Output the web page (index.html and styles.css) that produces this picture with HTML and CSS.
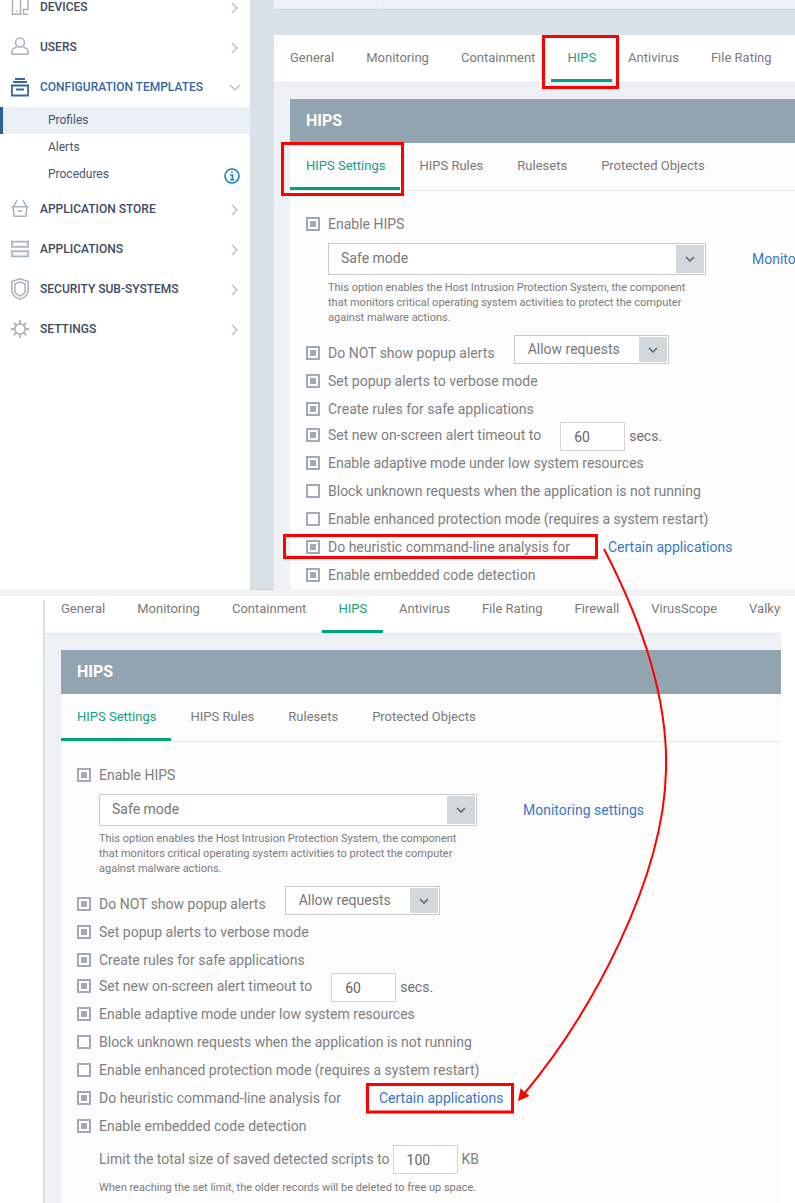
FILE: index.html
```html
<!DOCTYPE html>
<html lang="en">
<head>
<meta charset="utf-8">
<title>HIPS settings</title>
<link rel="stylesheet" href="styles.css">
</head>
<body>
<div class="page">
  <section class="shot shot-upper">
    <aside class="sidebar">
      <ul class="nav">
        <li class="nav-item"><svg class="nav-icon" viewBox="0 0 18 18"><path d="M1.5 -2V17.200H9.500V-2M4.800 14h1.500M17 -2V12.500H12.500V17.200H17"/></svg><span>DEVICES</span><svg class="chev" viewBox="0 0 8 12"><path d="M1 1l5 5-5 5"/></svg></li>
        <li class="nav-item"><svg class="nav-icon" viewBox="0 0 18 18"><circle cx="9" cy="5.500" r="4.500"/><path d="M.8 17.200V15c0-2.800 3-4.500 5-4.800M17.200 17.200V15c0-2.800-3-4.500-5-4.800M.8 17.200H17.200"/></svg><span>USERS</span><svg class="chev" viewBox="0 0 8 12"><path d="M1 1l5 5-5 5"/></svg></li>
        <li class="nav-item nav-open"><svg class="nav-icon" viewBox="0 0 18 18"><path d="M4 2H14M2 5H16M.9 8.500H17.100V18.500H.9ZM5 12.500H13"/></svg><span>CONFIGURATION TEMPLATES</span><svg class="chev chev-down" viewBox="0 0 12 8"><path d="M1 1l5 5 5-5"/></svg></li>
        <li class="sub-item sub-active">Profiles</li>
        <li class="sub-item">Alerts</li>
        <li class="sub-item">Procedures<svg class="info" viewBox="0 0 16 16"><circle cx="8" cy="8" r="7"/><path d="M6.200 7H8.400V11.800M6.200 11.800H10.200M7.200 4.300H8.700"/></svg></li>
        <li class="nav-item"><svg class="nav-icon" viewBox="0 0 18 18"><path d="M.5 7.800H17.500M2 7.800L3.200 17.300H14.800L16 7.800M6 1L2.500 7.800M12 1L15.500 7.800M6.500 12H11.500"/></svg><span>APPLICATION STORE</span><svg class="chev" viewBox="0 0 8 12"><path d="M1 1l5 5-5 5"/></svg></li>
        <li class="nav-item"><svg class="nav-icon nav-icon-bands" viewBox="0 0 18 18"><path d="M.8 1.500H17.200V7H.8ZM.8 11H17.200V16.500H.8Z"/><path class="band-line" d="M3 4.200H15M3 13.700H15"/></svg><span>APPLICATIONS</span><svg class="chev" viewBox="0 0 8 12"><path d="M1 1l5 5-5 5"/></svg></li>
        <li class="nav-item"><svg class="nav-icon nav-icon-tall" viewBox="0 0 18 22"><path d="M9 .8L17.200 3.500V12.500C17.200 17 13 19.700 9 21.200 5 19.700 .8 17 .8 12.500V3.500Z"/><path d="M9 4L14.200 5.700V12.500C14.200 15 11.500 16.900 9 18 6.500 16.900 3.800 15 3.800 12.500V5.700Z"/></svg><span>SECURITY SUB-SYSTEMS</span><svg class="chev" viewBox="0 0 8 12"><path d="M1 1l5 5-5 5"/></svg></li>
        <li class="nav-item"><svg class="nav-icon nav-icon-gear" viewBox="0 0 18 18"><circle cx="9" cy="9" r="5.200"/><path d="M9 0V3.500M9 14.500V18M0 9H3.500M14.500 9H18M2.800 2.800L5.200 5.200M12.800 12.800L15.200 15.200M15.200 2.800L12.800 5.200M5.200 12.800L2.800 15.200"/></svg><span>SETTINGS</span><svg class="chev" viewBox="0 0 8 12"><path d="M1 1l5 5-5 5"/></svg></li>
      </ul>
    </aside>
    <main class="main">
      <div class="topbar"><div class="topbar-cell"></div></div>
      <div class="panel">
        <nav class="tabs">
          <span class="tab">General</span><span class="tab">Monitoring</span><span class="tab">Containment</span><span class="tab tab-active">HIPS</span><span class="tab">Antivirus</span><span class="tab">File Rating</span>
        </nav>
        <div class="section">
          <h2 class="section-title">HIPS</h2>
          <div class="section-body">
            <nav class="subtabs">
              <span class="tab tab-active">HIPS Settings</span><span class="tab">HIPS Rules</span><span class="tab">Rulesets</span><span class="tab">Protected Objects</span>
            </nav>
            <div class="form">
              <div class="row"><span class="check on"></span><span class="label">Enable HIPS</span></div>
              <div class="select-row">
                <div class="select select-wide"><span>Safe mode</span><span class="select-btn"><svg viewBox="0 0 10 6"><path d="M1 1l4 4 4-4"/></svg></span></div>
                <a class="link link-monitor">Monitoring settings</a>
              </div>
              <p class="hint hint-main">This option enables the Host Intrusion Protection System, the component<br>that monitors critical operating system activities to protect the computer<br>against malware actions.</p>
              <div class="row row-first"><span class="check on"></span><span class="label">Do NOT show popup alerts</span><div class="select select-small"><span>Allow requests</span><span class="select-btn"><svg viewBox="0 0 10 6"><path d="M1 1l4 4 4-4"/></svg></span></div></div>
              <div class="row"><span class="check on"></span><span class="label">Set popup alerts to verbose mode</span></div>
              <div class="row"><span class="check on"></span><span class="label">Create rules for safe applications</span></div>
              <div class="row row-short"><span class="check on"></span><span class="label">Set new on-screen alert timeout to</span><span class="input input-gap">60</span><span class="unit">secs.</span></div>
              <div class="row"><span class="check on"></span><span class="label">Enable adaptive mode under low system resources</span></div>
              <div class="row"><span class="check"></span><span class="label">Block unknown requests when the application is not running</span></div>
              <div class="row"><span class="check"></span><span class="label">Enable enhanced protection mode (requires a system restart)</span></div>
              <div class="row"><span class="check on"></span><span class="label">Do heuristic command-line analysis for</span><a class="link link-apps">Certain applications</a></div>
              <div class="row"><span class="check on"></span><span class="label">Enable embedded code detection</span></div>
            </div>
          </div>
        </div>
      </div>
    </main>
  </section>

  <section class="shot shot-lower">
    <div class="gutter"></div>
    <div class="panel panel-lower">
      <nav class="tabs">
        <span class="tab">General</span><span class="tab">Monitoring</span><span class="tab">Containment</span><span class="tab tab-active">HIPS</span><span class="tab">Antivirus</span><span class="tab">File Rating</span><span class="tab">Firewall</span><span class="tab">VirusScope</span><span class="tab">Valkyrie</span>
      </nav>
      <div class="section">
        <h2 class="section-title">HIPS</h2>
        <div class="section-body">
          <nav class="subtabs">
            <span class="tab tab-active">HIPS Settings</span><span class="tab">HIPS Rules</span><span class="tab">Rulesets</span><span class="tab">Protected Objects</span>
          </nav>
          <div class="form">
            <div class="row"><span class="check on"></span><span class="label">Enable HIPS</span></div>
            <div class="select-row">
              <div class="select select-wide"><span>Safe mode</span><span class="select-btn"><svg viewBox="0 0 10 6"><path d="M1 1l4 4 4-4"/></svg></span></div>
              <a class="link link-monitor">Monitoring settings</a>
            </div>
            <p class="hint hint-main">This option enables the Host Intrusion Protection System, the component<br>that monitors critical operating system activities to protect the computer<br>against malware actions.</p>
            <div class="row row-first"><span class="check on"></span><span class="label">Do NOT show popup alerts</span><div class="select select-small"><span>Allow requests</span><span class="select-btn"><svg viewBox="0 0 10 6"><path d="M1 1l4 4 4-4"/></svg></span></div></div>
            <div class="row"><span class="check on"></span><span class="label">Set popup alerts to verbose mode</span></div>
            <div class="row"><span class="check on"></span><span class="label">Create rules for safe applications</span></div>
            <div class="row row-short"><span class="check on"></span><span class="label">Set new on-screen alert timeout to</span><span class="input input-gap">60</span><span class="unit">secs.</span></div>
            <div class="row"><span class="check on"></span><span class="label">Enable adaptive mode under low system resources</span></div>
            <div class="row"><span class="check"></span><span class="label">Block unknown requests when the application is not running</span></div>
            <div class="row"><span class="check"></span><span class="label">Enable enhanced protection mode (requires a system restart)</span></div>
            <div class="row"><span class="check on"></span><span class="label">Do heuristic command-line analysis for</span><a class="link link-apps">Certain applications</a></div>
            <div class="row"><span class="check on"></span><span class="label">Enable embedded code detection</span></div>
            <div class="limit-row"><span class="label limit-label">Limit the total size of saved detected scripts to</span><span class="input input-limit">100</span><span class="unit unit-light">KB</span></div>
            <p class="hint hint-limit">When reaching the set limit, the older records will be deleted to free up space.</p>
          </div>
        </div>
      </div>
    </div>
  </section>

  <svg class="marks" viewBox="0 0 795 1203" aria-hidden="true">
    <rect x="543.5" y="36.5" width="74" height="51"/>
    <rect x="282.5" y="143.5" width="120" height="51"/>
    <rect x="284.5" y="535.5" width="312" height="22"/>
    <rect x="367.5" y="1084.5" width="145" height="27.5"/>
    <path class="arrow" d="M604 549C642 622 668 700 666 770C664 880 590 1015 524 1094"/>
    <path class="arrow-head" d="M518 1101L520.500 1088.500L529.500 1096Z"/>
  </svg>
</div>
</body>
</html>
```
FILE: styles.css
```css
* { box-sizing: border-box; }
html, body { margin: 0; padding: 0; background: #fff; }
body { font-family: Roboto, "Liberation Sans", sans-serif; color: #7d7d7d; }
.page { position: relative; width: 795px; height: 1203px; overflow: hidden; background: #fff; }

.shot { overflow: hidden; display: flex; }
.shot-upper { height: 596px; border-bottom: 6px solid #f2f2f2; box-shadow: inset 0 -1px 0 #cfd2d4; background: #d9e1e8; position: relative; }
.shot-lower { height: 607px; padding-left: 43px; }

/* sidebar */
.sidebar { width: 250px; flex: none; background: #fff; overflow: hidden; }
.nav { list-style: none; margin: -14px 0 0; padding: 0; }
.nav-item { height: 40px; display: flex; align-items: center; padding: 0 11px; font-size: 12px; font-weight: 500; color: #3f4a63; position: relative; }
.nav-item span { margin-left: 11px; flex: 1; padding-top: 2px; }
.nav-open { color: #3567a3; margin-bottom: 1px; }
.nav-icon { width: 18px; height: 18px; flex: none; fill: none; stroke: #a9b3bd; stroke-width: 1.5; overflow: visible; }
.nav-icon-tall { height: 22px; margin-top: 2px; }
.nav-icon-gear { stroke-width: 1.8; margin-top: 2px; }
.nav-icon-bands { stroke-width: 1.6; fill: #e6eaee; margin-top: 2px; }
.band-line { stroke: #fff; stroke-width: 1.5; fill: none; }
.nav-open .nav-icon { stroke: #3567a3; stroke-width: 1.8; }
.chev { width: 8px; height: 12px; fill: none; stroke: #b2b9c1; stroke-width: 1.2; margin-top: 4px; }
.chev-down { width: 12px; height: 8px; margin: 4px -2px 0 0; }
.sub-item { height: 27px; padding-left: 48px; font-size: 12px; line-height: 27px; color: #4a5568; position: relative; }
.sub-active { background: #ebf0f7; box-shadow: inset 3px 0 0 #2f5f9e; }
.info { position: absolute; left: 224px; top: 7px; width: 16px; height: 16px; fill: none; stroke: #1b7fc4; stroke-width: 1.6; }

/* upper main */
.main { flex: 1; min-width: 0; overflow: hidden; padding-left: 24px; }
.topbar { height: 10px; background: #edf1f5; border-bottom: 1px solid #d0d7de; margin-bottom: 25px; width: 521px; }
.topbar-cell { width: 104px; height: 9px; border-right: 1px solid #e3e8ee; }

/* panel */
.panel { width: 736px; flex: none; background: #edf1f5; }
.panel-lower { overflow: hidden; }
.panel-lower .tabs { margin-top: -10px; }
.gutter { width: 2px; flex: none; margin-top: 4px; background: #d9e1e8; }
.tabs { display: flex; height: 48px; background: #fff; border-bottom: 1px solid #e6e9ec; white-space: nowrap; overflow: hidden; }
.subtabs { display: flex; height: 48px; border-bottom: 1px solid #e6e8ea; white-space: nowrap; }
.tab { font-size: 13px; line-height: 46px; height: 47px; padding: 0 16px; color: #7a7a7a; flex: none; }
.subtabs .tab { padding: 0 15px 0 16px; margin-right: 3px; }
.tab-active { color: #14a085; border-bottom: 3px solid #04a17e; }
.section { padding: 16px 0 0 16px; }
.section-title { margin: 0; height: 44px; padding-left: 16px; background: #93a4b1; color: #fff; font-size: 16px; font-weight: 700; line-height: 44px; }
.section-body { background: #fcfcfc; height: 1000px; }

/* form */
.form { padding: 19px 0 0 16px; }
.row { display: flex; align-items: center; height: 28px; font-size: 14px; }
.row-first { margin-top: 14px; }
.row-short { height: 24px; margin-bottom: 2px; }
.check { width: 14px; height: 14px; flex: none; border: 2px solid #a3aab7; background: #fff; margin-right: 8px; position: relative; }
.check.on::after { content: ""; position: absolute; left: 2px; top: 2px; width: 6px; height: 6px; background: #a3aab7; }
.label { color: #808080; white-space: nowrap; font-size: 14px; }
.limit-label { padding-bottom: 2px; }
.select-row { display: flex; align-items: center; margin: 5px 0 0 22px; }
.select { display: flex; align-items: center; justify-content: space-between; background: #fff; border: 1px solid #c9c9c9; font-size: 14px; color: #777; box-shadow: inset 0 0 0 1px #fff; }
.select-wide { width: 378px; height: 32px; padding: 0 1px 0 12px; }
.select-small { width: 155px; height: 29px; margin: -7px 0 0 19px; padding: 0 1px 0 13px; }
.select-small span:first-child { margin-top: -1px; }
.select-wide span:first-child { margin-top: -3px; }
.select-btn { width: 28px; align-self: stretch; margin: 1px 0; background: #d3d8dd; display: flex; align-items: center; justify-content: center; flex: none; }
.select-btn svg { width: 10px; height: 6px; fill: none; stroke: #5d6a75; stroke-width: 1.6; }
.link { color: #3b78c4; font-size: 14px; white-space: nowrap; }
.link-monitor { margin-left: 46px; }
.link-apps { margin-left: 38px; }
.hint { margin: 0; font-size: 11px; line-height: 15px; color: #7b7b7b; white-space: nowrap; }
.hint-main { margin: 5px 0 0 22px; }
.input { display: flex; align-items: center; width: 65px; height: 29px; border: 1px solid #d4d4d4; background: #fff; padding-left: 13px; font-size: 14px; color: #666; flex: none; }
.input-gap { margin: 3px 0 0 19px; }
.unit { margin-left: 4px; color: #707070; font-size: 14px; padding-top: 2px; }
.unit-light { color: #808080; padding-top: 0; padding-bottom: 2px; }
.limit-row { display: flex; align-items: center; height: 29px; margin: 5px 0 0 22px; }
.input-limit { margin-left: 3px; }
.hint-limit { margin: 6px 0 0 22px; }

/* annotations */
.marks { position: absolute; left: 0; top: 0; width: 795px; height: 1203px; pointer-events: none; }
.marks rect { fill: none; stroke: #f00; stroke-width: 3; }
.arrow { fill: none; stroke: #f00; stroke-width: 2; }
.arrow-head { fill: #f00; }
```
